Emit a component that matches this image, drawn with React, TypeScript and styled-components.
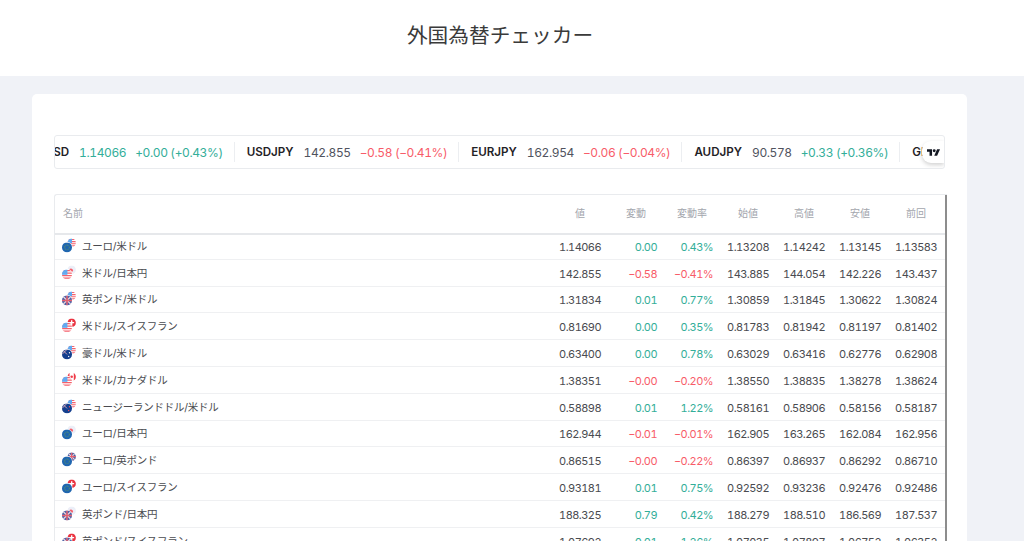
import styled, { createGlobalStyle } from 'styled-components';

const GlobalStyle = createGlobalStyle`
  html, body {
    margin: 0;
    height: 541px;
    overflow: hidden;
    background: #f0f2f7;
  }
  body {
    font-family: Inter, "Noto Sans CJK JP", sans-serif;
    color: #3c4043;
  }
`;

const FONT_GREEN = '#33ae99';
const FONT_RED = '#f85c69';

const Header = styled.header`
  height: 76px;
  box-sizing: border-box;
  padding-right: 24px;
  background: #fff;
  display: flex;
  align-items: center;
  justify-content: center;
`;

const Title = styled.h1`
  margin: 0 0 8px;
  font-family: "Noto Sans CJK JP", sans-serif;
  font-size: 20.7px;
  font-weight: 400;
  color: #3a3a3a;
`;

const Main = styled.main`
  padding: 18px 57px 0 32px;
`;

const Card = styled.section`
  background: #fff;
  border-radius: 5px 5px 0 0;
  padding: 41px 22px 0;
  height: 460px;
  box-sizing: border-box;
  overflow: hidden;
`;

const TickerTape = styled.div`
  position: relative;
  height: 34px;
  box-sizing: border-box;
  border: 1px solid #e9ebee;
  border-radius: 3px;
  overflow: hidden;
  display: flex;
  align-items: center;
`;

const TickerTrack = styled.div`
  display: flex;
  align-items: center;
  flex: none;
  margin-left: -45.5px;
`;

const TickerItem = styled.div`
  display: flex;
  align-items: center;
  flex: none;
  height: 20px;
  padding: 0 11px 0 12px;
  font-size: 12px;
  letter-spacing: -0.4px;
  font-variant-numeric: tabular-nums;
  white-space: nowrap;
  border-right: 1px solid #eceef1;
`;

const TickerSymbol = styled.span`
  font-weight: 600;
  font-size: 11.6px;
  letter-spacing: 0;
  color: #1f2226;
  margin-right: 10px;
`;

const TickerPrice = styled.span<{ $tone?: string }>`
  color: ${({ $tone }) => $tone ?? '#50535e'};
  margin-right: 9px;
`;

const TickerDelta = styled.span<{ $tone: string }>`
  color: ${({ $tone }) => $tone};
`;

const TvBadge = styled.div`
  position: absolute;
  right: 0;
  top: 5px;
  width: 22px;
  height: 22px;
  background: #fff;
  border-radius: 9px 0 0 9px;
  box-shadow: 0 2px 4px rgba(0, 0, 0, 0.18);
  display: flex;
  align-items: center;
  justify-content: center;
`;

const TableWrap = styled.div`
  margin: 25px -2px 0 0;
  border: 1px solid #e9ebee;
  border-right: 0;
  border-radius: 3px 0 0 0;
  height: 400px;
  box-sizing: border-box;
  position: relative;
`;

const ScrollThumb = styled.div`
  position: absolute;
  top: 0;
  right: 0;
  bottom: 0;
  width: 2px;
  background: #8d8d8d;
`;

const gridColumns = '1fr repeat(7, 56px)';

const HeadRow = styled.div`
  display: grid;
  grid-template-columns: ${gridColumns};
  height: 40px;
  margin-bottom: -2px;
  box-sizing: border-box;
  padding: 0 3px 3px 0;
  align-items: center;
  border-bottom: 2px solid #e6e8eb;
`;

const HeadCell = styled.div<{ $left?: boolean }>`
  font-size: 10px;
  color: #a3a6ad;
  text-align: ${({ $left }) => ($left ? 'left' : 'center')};
  padding-left: ${({ $left }) => ($left ? '8px' : '0')};
`;

const Row = styled.div`
  display: grid;
  grid-template-columns: ${gridColumns};
  height: 26.8px;
  box-sizing: border-box;
  padding-right: 2px;
  align-items: center;
  border-bottom: 1px solid #eff0f2;
`;

const NameCell = styled.div`
  display: flex;
  align-items: center;
  gap: 6px;
  padding-left: 7px;
  font-size: 10.5px;
  letter-spacing: -0.25px;
  color: #4a4b50;
  margin-top: -1px;
`;

const NumCell = styled.div<{ $tone?: string }>`
  font-size: 11px;
  letter-spacing: -0.55px;
  font-variant-numeric: tabular-nums;
  text-align: right;
  padding: 2px 8px 0 0;
  color: ${({ $tone }) => $tone ?? '#4a4b50'};
`;

type Flag = 'eu' | 'us' | 'gb' | 'jp' | 'ch' | 'au' | 'ca' | 'nz';

// tiny round currency flags, back one sits top right of the front one
const FlagArt = ({ code }: { code: Flag }) => {
  switch (code) {
    case 'eu':
      return (
        <>
          <rect width="12" height="12" fill="#1f66b0" />
          <circle cx="6" cy="6" r="2.8" fill="none" stroke="#6f9f5a" strokeWidth="1" strokeDasharray="1 .7" />
        </>
      );
    case 'us':
      return (
        <>
          <rect width="12" height="12" fill="#fff" />
          <path d="M0 1.5h12M0 4.5h12M0 7.5h12M0 10.5h12" stroke="#f5606c" strokeWidth="1.5" />
          <rect width="6.5" height="6.5" fill="#62aaf0" />
        </>
      );
    case 'gb':
      return (
        <>
          <rect width="12" height="12" fill="#4a63a8" />
          <path d="M0 0l12 12M12 0L0 12" stroke="#f0d6dc" strokeWidth="1.6" />
          <path d="M6 0v12M0 6h12" stroke="#e4606f" strokeWidth="1.8" />
        </>
      );
    case 'jp':
      return (
        <>
          <rect width="12" height="12" fill="#eceff8" />
          <circle cx="5" cy="7" r="2.8" fill="#f5606c" />
        </>
      );
    case 'ch':
      return (
        <>
          <rect width="12" height="12" fill="#ea3340" />
          <path d="M6 2.5v7M2.5 6h7" stroke="#fff" strokeWidth="2" />
        </>
      );
    case 'au':
    case 'nz':
      return (
        <>
          <rect width="12" height="12" fill="#143f8e" />
          <path d="M0 0l6 6M6 0L0 6" stroke="#f2b6bd" strokeWidth="1" />
          <circle cx="9" cy="4" r=".8" fill={code === 'nz' ? '#f5505c' : '#fff'} />
          <circle cx="8" cy="8.5" r=".8" fill={code === 'nz' ? '#f5505c' : '#fff'} />
        </>
      );
    case 'ca':
      return (
        <>
          <rect width="12" height="12" fill="#fff" />
          <rect width="3" height="12" fill="#ef3c49" />
          <rect x="9" width="3" height="12" fill="#ef3c49" />
          <circle cx="6" cy="6" r="1.8" fill="#ef3c49" />
        </>
      );
  }
};

const FlagPair = ({ base, quote }: { base: Flag; quote: Flag }) => {
  const id = `${base}-${quote}`;
  return (
    <svg width="14" height="15" viewBox="0 0 14 15" style={{ flex: 'none' }}>
      <defs>
        <clipPath id={`f-${id}`}>
          <circle cx="6" cy="6" r="6" />
        </clipPath>
      </defs>
      <g transform="translate(5.4 .4) scale(.71)" clipPath={`url(#f-${id})`}>
        <FlagArt code={quote} />
      </g>
      <circle cx="5" cy="9.4" r="5.6" fill="#fff" />
      <g transform="translate(0 4.4) scale(.833)" clipPath={`url(#f-${id})`}>
        <FlagArt code={base} />
      </g>
    </svg>
  );
};

const ticker = [
  { symbol: 'EURUSD', price: '1.14066', delta: '+0.00 (+0.43%)', up: true, tintPrice: true },
  { symbol: 'USDJPY', price: '142.855', delta: '−0.58 (−0.41%)', up: false },
  { symbol: 'EURJPY', price: '162.954', delta: '−0.06 (−0.04%)', up: false },
  { symbol: 'AUDJPY', price: '90.578', delta: '+0.33 (+0.36%)', up: true },
  { symbol: 'GBPUSD', price: '1.31834', delta: '+0.01 (+0.77%)', up: true },
];

const rows: { name: string; base: Flag; quote: Flag; cells: string[] }[] = [
  { name: 'ユーロ/米ドル', base: 'eu', quote: 'us', cells: ['1.14066', '0.00', '0.43%', '1.13208', '1.14242', '1.13145', '1.13583'] },
  { name: '米ドル/日本円', base: 'us', quote: 'jp', cells: ['142.855', '−0.58', '−0.41%', '143.885', '144.054', '142.226', '143.437'] },
  { name: '英ポンド/米ドル', base: 'gb', quote: 'us', cells: ['1.31834', '0.01', '0.77%', '1.30859', '1.31845', '1.30622', '1.30824'] },
  { name: '米ドル/スイスフラン', base: 'us', quote: 'ch', cells: ['0.81690', '0.00', '0.35%', '0.81783', '0.81942', '0.81197', '0.81402'] },
  { name: '豪ドル/米ドル', base: 'au', quote: 'us', cells: ['0.63400', '0.00', '0.78%', '0.63029', '0.63416', '0.62776', '0.62908'] },
  { name: '米ドル/カナダドル', base: 'us', quote: 'ca', cells: ['1.38351', '−0.00', '−0.20%', '1.38550', '1.38835', '1.38278', '1.38624'] },
  { name: 'ニュージーランドドル/米ドル', base: 'nz', quote: 'us', cells: ['0.58898', '0.01', '1.22%', '0.58161', '0.58906', '0.58156', '0.58187'] },
  { name: 'ユーロ/日本円', base: 'eu', quote: 'jp', cells: ['162.944', '−0.01', '−0.01%', '162.905', '163.265', '162.084', '162.956'] },
  { name: 'ユーロ/英ポンド', base: 'eu', quote: 'gb', cells: ['0.86515', '−0.00', '−0.22%', '0.86397', '0.86937', '0.86292', '0.86710'] },
  { name: 'ユーロ/スイスフラン', base: 'eu', quote: 'ch', cells: ['0.93181', '0.01', '0.75%', '0.92592', '0.93236', '0.92476', '0.92486'] },
  { name: '英ポンド/日本円', base: 'gb', quote: 'jp', cells: ['188.325', '0.79', '0.42%', '188.279', '188.510', '186.569', '187.537'] },
  { name: '英ポンド/スイスフラン', base: 'gb', quote: 'ch', cells: ['1.07692', '0.01', '1.26%', '1.07035', '1.07897', '1.06752', '1.06352'] },
];

const headers = ['値', '変動', '変動率', '始値', '高値', '安値', '前回'];

const toneOf = (cells: string[], index: number) => {
  if (index !== 1 && index !== 2) return undefined;
  return cells[index].startsWith('−') ? FONT_RED : FONT_GREEN;
};

export default function App() {
  return (
    <>
      <GlobalStyle />
      <Header>
        <Title>外国為替チェッカー</Title>
      </Header>
      <Main>
        <Card>
          <TickerTape>
            <TickerTrack>
              {ticker.map(t => (
                <TickerItem key={t.symbol}>
                  <TickerSymbol>{t.symbol}</TickerSymbol>
                  <TickerPrice $tone={t.tintPrice ? FONT_GREEN : undefined}>{t.price}</TickerPrice>
                  <TickerDelta $tone={t.up ? FONT_GREEN : FONT_RED}>{t.delta}</TickerDelta>
                </TickerItem>
              ))}
            </TickerTrack>
            <TvBadge>
              <svg width="13" height="7" viewBox="0 0 36 18" fill="#131722">
                <path d="M14 18H7V7H0V0h14v18z" />
                <circle cx="20" cy="4" r="4" />
                <path d="M28 0h8l-8 18h-8l8-18z" />
              </svg>
            </TvBadge>
          </TickerTape>
          <TableWrap>
            <ScrollThumb />
            <HeadRow>
              <HeadCell $left>名前</HeadCell>
              {headers.map(h => (
                <HeadCell key={h}>{h}</HeadCell>
              ))}
            </HeadRow>
            {rows.map(r => (
              <Row key={r.name}>
                <NameCell>
                  <FlagPair base={r.base} quote={r.quote} />
                  {r.name}
                </NameCell>
                {r.cells.map((c, i) => (
                  <NumCell key={i} $tone={toneOf(r.cells, i)}>
                    {c}
                  </NumCell>
                ))}
              </Row>
            ))}
          </TableWrap>
        </Card>
      </Main>
    </>
  );
}
